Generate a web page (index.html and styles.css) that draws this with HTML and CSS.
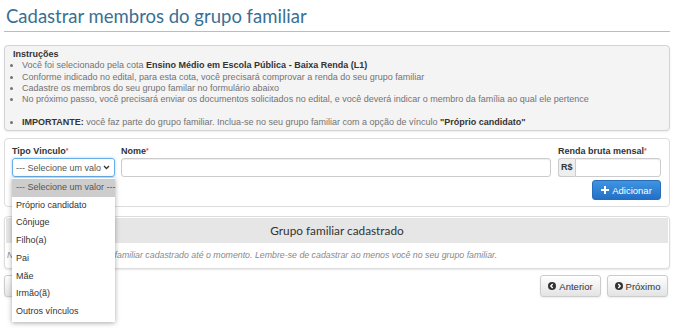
FILE: index.html
```html
<!DOCTYPE html>
<html lang="pt-BR">
<head>
    <meta charset="UTF-8">
    <meta name="viewport" content="width=device-width, initial-scale=1.0">
    <title>Cadastrar membros do grupo familiar</title>
    <link rel="stylesheet" href="styles.css">
</head>
<body>
    <div class="page">
        <h1 class="title">Cadastrar membros do grupo familiar</h1>

        <div class="instructions">
            <div class="instr-head">Instruções</div>
            <ul>
                <li>Você foi selecionado pela cota <b>Ensino Médio em Escola Pública - Baixa Renda (L1)</b></li>
                <li>Conforme indicado no edital, para esta cota, você precisará comprovar a renda do seu grupo familiar</li>
                <li>Cadastre os membros do seu grupo familar no formulário abaixo</li>
                <li>No próximo passo, você precisará enviar os documentos solicitados no edital, e você deverá indicar o membro da família ao qual ele pertence</li>
                <li class="blank"></li>
                <li><b>IMPORTANTE:</b> você faz parte do grupo familiar. Inclua-se no seu grupo familiar com a opção de vínculo <b>"Próprio candidato"</b></li>
            </ul>
        </div>

        <form class="panel form-panel">
            <div class="fields">
                <div class="field field-tipo">
                    <label for="tipo">Tipo Vinculo<span class="req">*</span></label>
                    <div class="select-box" id="tipo">
                        <span class="select-text">--- Selecione um valor ---</span>
                        <svg class="caret" width="7" height="5" viewBox="0 0 7 5"><path d="M1 1 L3.5 3.5 L6 1" fill="none" stroke="#333" stroke-width="1.3"/></svg>
                    </div>
                    <ul class="dropdown">
                        <li class="selected">--- Selecione um valor ---</li>
                        <li>Próprio candidato</li>
                        <li>Cônjuge</li>
                        <li>Filho(a)</li>
                        <li>Pai</li>
                        <li>Mãe</li>
                        <li>Irmão(ã)</li>
                        <li>Outros vínculos</li>
                    </ul>
                </div>
                <div class="field field-nome">
                    <label for="nome">Nome<span class="req">*</span></label>
                    <input type="text" id="nome" class="input">
                </div>
                <div class="field field-renda">
                    <label for="renda">Renda bruta mensal<span class="req">*</span></label>
                    <div class="input-group">
                        <span class="addon">R$</span>
                        <input type="text" id="renda" class="input">
                    </div>
                </div>
            </div>
            <div class="actions">
                <button type="button" class="btn btn-primary">
                    <svg width="8" height="8" viewBox="0 0 8 8"><path d="M3 0h2v3h3v2H5v3H3V5H0V3h3z" fill="#fff"/></svg>
                    Adicionar
                </button>
            </div>
        </form>

        <div class="panel grupo">
            <div class="grupo-head">Grupo familiar cadastrado</div>
            <div class="grupo-body">Nenhum membro do grupo familiar cadastrado até o momento. Lembre-se de cadastrar ao menos você no seu grupo familiar.</div>
        </div>

        <div class="nav">
            <button type="button" class="btn btn-default">Voltar</button>
            <div class="nav-right">
                <button type="button" class="btn btn-default">
                    <svg width="8" height="8" viewBox="0 0 8 8"><circle cx="4" cy="4" r="4" fill="#333"/><path d="M4.7 2 L2.8 4 L4.7 6" fill="none" stroke="#fff" stroke-width="1.4"/></svg>
                    Anterior
                </button>
                <button type="button" class="btn btn-default">
                    <svg width="8" height="8" viewBox="0 0 8 8"><circle cx="4" cy="4" r="4" fill="#333"/><path d="M3.3 2 L5.2 4 L3.3 6" fill="none" stroke="#fff" stroke-width="1.4"/></svg>
                    Próximo
                </button>
            </div>
        </div>
    </div>
</body>
</html>
```

FILE: styles.css
```css
html, body {
    height: 330px;
}
body {
    margin: 0;
    padding: 0;
    background: #fff;
    font-family: "Liberation Sans", Arial, sans-serif;
    font-size: 9px;
    color: #555;
}
.page {
    padding: 0 7px 0 4px;
}
.title {
    margin: 0;
    padding: 4px 0 0 2px;
    height: 27px;
    font-family: Lato, "Open Sans", sans-serif;
    font-weight: normal;
    font-size: 18.5px;
    line-height: 24px;
    color: #3a6f94;
    border-bottom: 1px solid #a7c2d3;
}
.instructions {
    margin-top: 13px;
    padding: 3px 8px 2px 8px;
    background: #f4f4f4;
    border: 1px solid #d3d3d3;
    border-radius: 4px;
    box-shadow: 0 1px 2px rgba(0, 0, 0, 0.08);
    line-height: 11.3px;
    color: #737373;
}
.instr-head {
    font-weight: bold;
    color: #333;
}
.instructions ul {
    margin: 0;
    padding-left: 9px;
}
.instructions b {
    color: #333;
}
.instructions li.blank {
    list-style: none;
    height: 11.3px;
}
.panel {
    border: 1px solid #ddd;
    border-radius: 4px;
    background: #fff;
}
.form-panel {
    margin: 7px 0 0 0;
    padding: 6px 8px 6px 7px;
}
.fields {
    display: flex;
    gap: 6px;
}
.field {
    display: flex;
    flex-direction: column;
}
.field label {
    font-weight: bold;
    color: #333;
    line-height: 12px;
    margin-bottom: 1px;
}
.req {
    color: #e05a5a;
    font-size: 7px;
    vertical-align: top;
}
.field-tipo {
    width: 103px;
    position: relative;
}
.field-nome {
    flex: 1;
}
.field-renda {
    width: 103px;
    margin-left: 1px;
}
.select-box {
    box-sizing: border-box;
    height: 19px;
    border: 1px solid #66afe9;
    border-radius: 3px;
    box-shadow: 0 0 3px rgba(102, 175, 233, 0.6);
    display: flex;
    align-items: center;
    padding: 0 4px 0 3px;
    overflow: hidden;
    color: #555;
}
.select-text {
    flex: 1;
    white-space: nowrap;
    overflow: hidden;
}
.caret {
    flex: none;
    margin-left: 2px;
}
.input {
    box-sizing: border-box;
    height: 19px;
    width: 100%;
    margin: 0;
    border: 1px solid #ccc;
    border-radius: 3px;
    box-shadow: inset 0 1px 1px rgba(0, 0, 0, 0.075);
    font: inherit;
}
.input-group {
    display: flex;
}
.addon {
    box-sizing: border-box;
    width: 20px;
    height: 19px;
    line-height: 17px;
    text-align: center;
    background: #eee;
    border: 1px solid #ccc;
    border-right: none;
    border-radius: 3px 0 0 3px;
    font-weight: bold;
    color: #333;
}
.input-group .input {
    border-radius: 0 3px 3px 0;
}
.dropdown {
    position: absolute;
    left: 0;
    top: 33px;
    width: 103px;
    margin: 0;
    padding: 1px 0 1px 0;
    list-style: none;
    background: #fff;
    box-shadow: 0 1px 5px rgba(0, 0, 0, 0.35);
    z-index: 5;
}
.dropdown li {
    height: 17.7px;
    line-height: 17.7px;
    padding-left: 4px;
    color: #333;
    white-space: nowrap;
}
.dropdown li.selected {
    background: #cdcdcd;
    color: #555;
}
.actions {
    display: flex;
    justify-content: flex-end;
    margin-top: 3px;
}
.btn {
    box-sizing: border-box;
    font-family: "Liberation Sans", Arial, sans-serif;
    font-size: 9.5px;
    border-radius: 3px;
    cursor: pointer;
    display: inline-flex;
    align-items: center;
    justify-content: center;
    gap: 3px;
}
.btn-primary {
    width: 69px;
    height: 20px;
    color: #fff;
    border: 1px solid #2a6db8;
    background: linear-gradient(#3f94e2, #2370c6);
}
.btn-default {
    height: 22px;
    color: #333;
    border: 1px solid #ccc;
    background: linear-gradient(#fff, #e3e3e3);
    box-shadow: 0 1px 2px rgba(0, 0, 0, 0.08);
}
.grupo {
    margin-top: 9px;
    padding: 1px;
    box-shadow: 0 1px 2px rgba(0, 0, 0, 0.1);
}
.grupo-head {
    height: 25px;
    line-height: 25px;
    background: #e6e6e6;
    text-align: center;
    font-family: Lato, "Open Sans", sans-serif;
    font-size: 11.8px;
    color: #333;
}
.grupo-body {
    height: 24px;
    line-height: 24px;
    padding-left: 1px;
    font-style: italic;
    font-size: 8.8px;
    color: #888;
}
.nav {
    display: flex;
    justify-content: space-between;
    margin-top: 6px;
    padding-right: 2px;
}
.nav .btn-default {
    width: 61px;
}
.nav-right {
    display: flex;
    gap: 6px;
}
```
